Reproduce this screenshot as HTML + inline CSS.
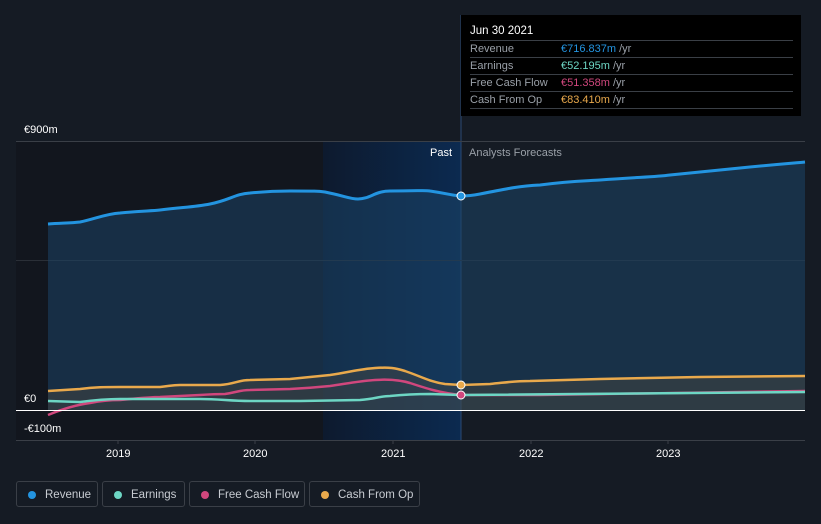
<!DOCTYPE html>
<html><head><meta charset="utf-8"><style>
body{margin:0;background:#151b24;width:821px;height:524px;overflow:hidden;font-family:"Liberation Sans",sans-serif;}
svg{position:absolute;left:0;top:0}
.tt{position:absolute;left:461px;top:15px;width:340px;height:101px;background:#000;color:#fff;font-size:11px}
.tt .h{position:absolute;left:9px;top:10px;font-size:11.5px}
.row{position:absolute;left:9px;width:323px;height:17px;border-top:1px solid #3a3f46;color:#9aa0a8;line-height:17px}
.row span{position:absolute;left:91px}
.leg{position:absolute;top:481px;height:26px;border:1px solid #3a3f47;border-radius:3px;color:#c8ccd2;font-size:11.5px;line-height:26px;box-sizing:border-box}
.leg i{position:absolute;left:11px;top:9px;width:8px;height:8px;border-radius:50%}
.leg b{font-weight:normal;position:absolute;left:28px}
.lbl{position:absolute;color:#fff;font-size:11px}
</style></head><body>
<svg width="821" height="524">
<defs>
<linearGradient id="hl" x1="0" x2="1"><stop offset="0" stop-color="#0d1a2e"/><stop offset="1" stop-color="#0c2a50"/></linearGradient>
</defs>
<rect x="16" y="141" width="445" height="299" fill="#12161e"/>
<rect x="323" y="141" width="138" height="299" fill="url(#hl)"/>
<line x1="461" y1="15" x2="461" y2="440" stroke="#2a4a75" stroke-width="1"/>
<line x1="16" y1="141.5" x2="805" y2="141.5" stroke="#3a3f47"/>
<line x1="16" y1="260.5" x2="805" y2="260.5" stroke="#2a2f37"/>
<line x1="16" y1="440.5" x2="805" y2="440.5" stroke="#3a3f47"/>
<g stroke="#3a3f47"><line x1="118" y1="440" x2="118" y2="444"/><line x1="255" y1="440" x2="255" y2="444"/><line x1="393" y1="440" x2="393" y2="444"/><line x1="531" y1="440" x2="531" y2="444"/><line x1="668" y1="440" x2="668" y2="444"/></g>
<path d="M48,224 C64,223 72,223 80,222 C95,219 105,214 120,213 C140,211 150,211 160,210 C185,207 195,207 210,204 C230,200 235,194 250,193 C270,191 280,191 290,191 C315,191 318,191 325,192 C345,196 350,199 358,199 C370,199 375,191 390,191 C420,191 425,190 430,191 C450,194 455,196 461,196 C470,196 475,195 480,194 C510,188 520,186 540,185 C570,181 585,181 600,180 C640,177 655,177 670,175 C710,171 720,170 740,168 C780,164 795,163 805,162 L805,410 L48,410Z" fill="#1c4466" fill-opacity="0.55"/>
<path d="M48,224 C64,223 72,223 80,222 C95,219 105,214 120,213 C140,211 150,211 160,210 C185,207 195,207 210,204 C230,200 235,194 250,193 C270,191 280,191 290,191 C315,191 318,191 325,192 C345,196 350,199 358,199 C370,199 375,191 390,191 C420,191 425,190 430,191 C450,194 455,196 461,196 C470,196 475,195 480,194 C510,188 520,186 540,185 C570,181 585,181 600,180 C640,177 655,177 670,175 C710,171 720,170 740,168 C780,164 795,163 805,162" fill="none" stroke="#2394e0" stroke-width="3"/>
<path d="M48,391 L80,389 C95,387 105,387 120,387 L160,387 C170,386 172,385 180,385 L220,385 C235,384 238,380 250,380 L290,379 C310,377 320,376 330,375 C350,372 360,369 375,368 C390,367 395,368 405,371 C420,376 430,382 445,384 L461,385 L490,384 C510,382 515,381 530,381 L600,379 L700,377 L805,376 L805,410 L48,410Z" fill="#5a5040" fill-opacity="0.35"/>
<path d="M48,391 L80,389 C95,387 105,387 120,387 L160,387 C170,386 172,385 180,385 L220,385 C235,384 238,380 250,380 L290,379 C310,377 320,376 330,375 C350,372 360,369 375,368 C390,367 395,368 405,371 C420,376 430,382 445,384 L461,385 L490,384 C510,382 515,381 530,381 L600,379 L700,377 L805,376" fill="none" stroke="#e9a94c" stroke-width="2.5"/>
<path d="M48,415 C60,410 75,405 90,403 C100,401 110,400 120,400 C140,398 150,397 160,397 L200,395 C215,394 220,394 225,394 C238,392 240,390 250,390 L290,389 C310,388 320,387 330,386 C350,383 360,381 375,380 C390,379 400,380 410,383 C425,388 440,393 461,395 L540,395 L805,391" fill="none" stroke="#d0477d" stroke-width="2.5"/>
<path d="M48,401 L80,402 C95,400 105,399 120,399 L200,399 C220,399 230,401 250,401 L300,401 L360,400 C375,399 380,396 390,396 C410,394 420,394 430,394 L461,395 L805,392" fill="none" stroke="#6dd6c4" stroke-width="2.5"/>
<line x1="16" y1="410.5" x2="805" y2="410.5" stroke="#fff" stroke-width="1"/>
<circle cx="461" cy="196" r="4" fill="#2394e0" stroke="#fff" stroke-width="1"/>
<circle cx="461" cy="385" r="4" fill="#e9a94c" stroke="#fff" stroke-width="1"/>
<circle cx="461" cy="395" r="4" fill="#d0477d" stroke="#fff" stroke-width="1"/>
</svg>
<div class="lbl" style="left:24px;top:124px">€900m</div>
<div class="lbl" style="left:24px;top:393px">€0</div>
<div class="lbl" style="left:24px;top:423px">-€100m</div>
<div class="lbl" style="left:430px;top:147px">Past</div>
<div class="lbl" style="left:469px;top:147px;color:#9aa0a8">Analysts Forecasts</div>
<div class="lbl" style="left:106px;top:448px">2019</div>
<div class="lbl" style="left:243px;top:448px">2020</div>
<div class="lbl" style="left:381px;top:448px">2021</div>
<div class="lbl" style="left:519px;top:448px">2022</div>
<div class="lbl" style="left:656px;top:448px">2023</div>
<div class="tt"><div class="h">Jun 30 2021</div>
<div class="row" style="top:25px">Revenue<span><font color="#2394e0">€716.837m</font> /yr</span></div>
<div class="row" style="top:42px">Earnings<span><font color="#6dd6c4">€52.195m</font> /yr</span></div>
<div class="row" style="top:59px">Free Cash Flow<span><font color="#d0477d">€51.358m</font> /yr</span></div>
<div class="row" style="top:76px">Cash From Op<span><font color="#e9a94c">€83.410m</font> /yr</span></div>
<div class="row" style="top:93px;height:0"></div>
</div>
<div class="leg" style="left:16px;width:82px"><i style="background:#2394e0"></i><b>Revenue</b></div>
<div class="leg" style="left:102px;width:83px"><i style="background:#6dd6c4"></i><b>Earnings</b></div>
<div class="leg" style="left:189px;width:116px"><i style="background:#d0477d"></i><b>Free Cash Flow</b></div>
<div class="leg" style="left:309px;width:111px"><i style="background:#e9a94c"></i><b>Cash From Op</b></div>
</body></html>
